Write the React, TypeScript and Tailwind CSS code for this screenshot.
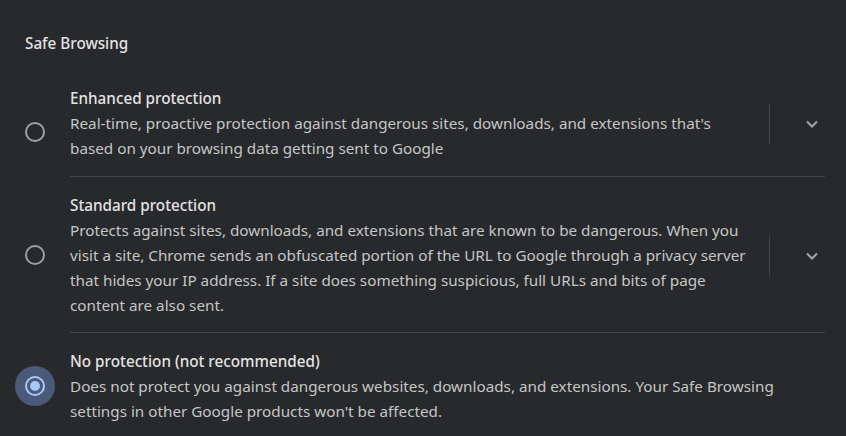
import React from "react";

type Option = {
  id: string;
  title: string;
  lines: string[];
  expandable: boolean;
  pad: string;
};

const options: Option[] = [
  {
    id: "enhanced",
    title: "Enhanced protection",
    lines: [
      "Real-time, proactive protection against dangerous sites, downloads, and extensions that's",
      "based on your browsing data getting sent to Google",
    ],
    expandable: true,
    pad: "pt-0 pb-[15px]",
  },
  {
    id: "standard",
    title: "Standard protection",
    lines: [
      "Protects against sites, downloads, and extensions that are known to be dangerous. When you",
      "visit a site, Chrome sends an obfuscated portion of the URL to Google through a privacy server",
      "that hides your IP address. If a site does something suspicious, full URLs and bits of page",
      "content are also sent.",
    ],
    expandable: true,
    pad: "pt-[16px] pb-[14px]",
  },
  {
    id: "none",
    title: "No protection (not recommended)",
    lines: [
      "Does not protect you against dangerous websites, downloads, and extensions. Your Safe Browsing",
      "settings in other Google products won't be affected.",
    ],
    expandable: false,
    pad: "pt-[16px] pb-[15px]",
  },
];

function Radio({ checked }: { checked: boolean }) {
  if (checked) {
    return (
      <div className="flex h-[40px] w-[40px] items-center justify-center rounded-full bg-[#4b5a78]">
        <div className="flex h-[20px] w-[20px] items-center justify-center rounded-full border-2 border-[#a8c7fa]">
          <div className="h-[10px] w-[10px] rounded-full bg-[#a8c7fa]" />
        </div>
      </div>
    );
  }
  return (
    <div className="flex h-[40px] w-[40px] items-center justify-center">
      <div className="h-[20px] w-[20px] rounded-full border-2 border-[#9aa0a6]" />
    </div>
  );
}

export default function App() {
  const selected = "none";

  return (
    <div
      className="h-[436px] w-[846px] overflow-hidden bg-[#28292c] text-[15.25px] leading-[25px]"
      style={{ fontFamily: '"Noto Sans", "Open Sans", sans-serif' }}
    >
      <div className="px-[25px] pt-[31px] font-medium text-[#e3e3e3]">Safe Browsing</div>

      <div className="mt-[30px] pr-[21px]">
        {options.map((opt, i) => (
          <div key={opt.id} className="flex items-center">
            <div className="flex w-[70px] shrink-0 justify-center">
              <Radio checked={opt.id === selected} />
            </div>
            <div
              className={`flex flex-1 items-center ${opt.pad} ${
                i < options.length - 1 ? "border-b border-[#46474a]" : ""
              }`}
            >
              <div className="w-[699px] shrink-0">
                <div className="font-medium text-[#e3e3e3]">{opt.title}</div>
                <div className="text-[#c4c7c5]">
                  {opt.lines.map((l) => (
                    <div key={l} className="whitespace-nowrap">
                      {l}
                    </div>
                  ))}
                </div>
              </div>
              {opt.expandable && (
                <div className="flex items-center">
                  <div className="h-[40px] w-px bg-[#46474a]" />
                  <div className="ml-[36px] flex h-[40px] w-[12px] items-center justify-center">
                    <svg width="12" height="8" viewBox="0 0 12 8" fill="none">
                      <path d="M1 1.5 6 6.5 11 1.5" stroke="#a4a7ab" strokeWidth="2" />
                    </svg>
                  </div>
                </div>
              )}
            </div>
          </div>
        ))}
      </div>
    </div>
  );
}
